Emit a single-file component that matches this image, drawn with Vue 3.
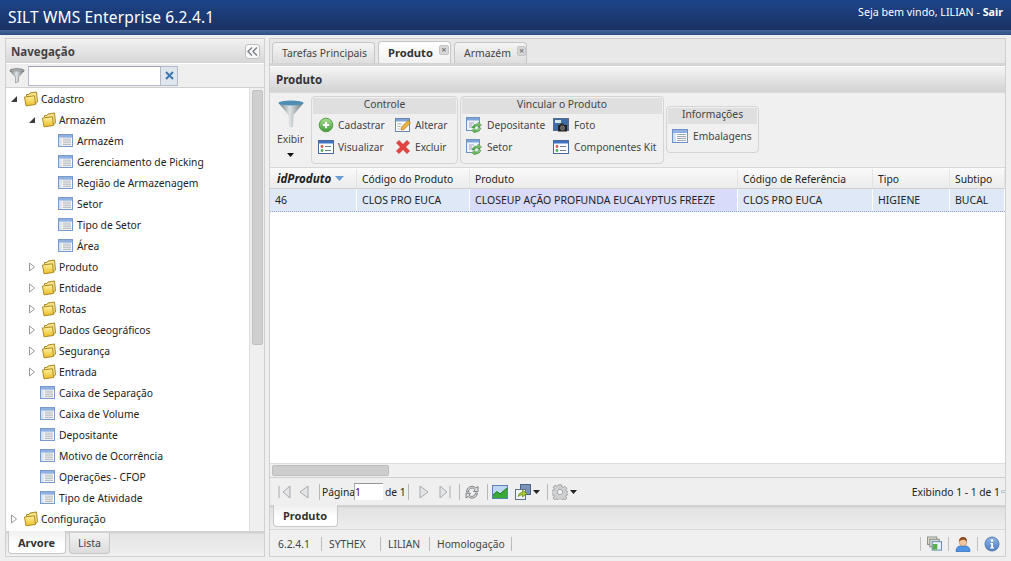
<script setup>
const tree = [
  { t: 'Cadastro', d: 0, k: 'open' },
  { t: 'Armazém', d: 1, k: 'open' },
  { t: 'Armazém', d: 2, k: 'leaf' },
  { t: 'Gerenciamento de Picking', d: 2, k: 'leaf' },
  { t: 'Região de Armazenagem', d: 2, k: 'leaf' },
  { t: 'Setor', d: 2, k: 'leaf' },
  { t: 'Tipo de Setor', d: 2, k: 'leaf' },
  { t: 'Área', d: 2, k: 'leaf' },
  { t: 'Produto', d: 1, k: 'closed' },
  { t: 'Entidade', d: 1, k: 'closed' },
  { t: 'Rotas', d: 1, k: 'closed' },
  { t: 'Dados Geográficos', d: 1, k: 'closed' },
  { t: 'Segurança', d: 1, k: 'closed' },
  { t: 'Entrada', d: 1, k: 'closed' },
  { t: 'Caixa de Separação', d: 1, k: 'leaf' },
  { t: 'Caixa de Volume', d: 1, k: 'leaf' },
  { t: 'Depositante', d: 1, k: 'leaf' },
  { t: 'Motivo de Ocorrência', d: 1, k: 'leaf' },
  { t: 'Operações - CFOP', d: 1, k: 'leaf' },
  { t: 'Tipo de Atividade', d: 1, k: 'leaf' },
  { t: 'Configuração', d: 0, k: 'closed' }
]
const cols = [
  { t: 'idProduto', v: '46', w: 87 },
  { t: 'Código do Produto', v: 'CLOS PRO EUCA', w: 113 },
  { t: 'Produto', v: 'CLOSEUP AÇÃO PROFUNDA EUCALYPTUS FREEZE', w: 268, sel: true },
  { t: 'Código de Referência', v: 'CLOS PRO EUCA', w: 135 },
  { t: 'Tipo', v: 'HIGIENE', w: 77 },
  { t: 'Subtipo', v: 'BUCAL', w: 55 }
]
const stats = [
  { t: '6.2.4.1', w: 44 },
  { t: 'SYTHEX', w: 52 },
  { t: 'LILIAN', w: 42 },
  { t: 'Homologação', w: 75 }
]
</script>

<template>
  <div class="page">
    <svg class="defs" aria-hidden="true">
      <defs>
        <linearGradient id="fold" x1="0" y1="0" x2="0" y2="1"><stop offset="0" stop-color="#fff3a0"/><stop offset="1" stop-color="#ecbc28"/></linearGradient>
        <linearGradient id="funn" x1="0" y1="0" x2="1" y2="0"><stop offset="0" stop-color="#6d7a80"/><stop offset=".45" stop-color="#dfe3e5"/><stop offset="1" stop-color="#69757b"/></linearGradient>
        <linearGradient id="grn" x1="0" y1="0" x2="0" y2="1"><stop offset="0" stop-color="#a8e08e"/><stop offset="1" stop-color="#3f9a3a"/></linearGradient>
        <linearGradient id="blu" x1="0" y1="0" x2="0" y2="1"><stop offset="0" stop-color="#8fb6ea"/><stop offset="1" stop-color="#4d7cc0"/></linearGradient>
        <symbol id="i-folder" viewBox="0 0 16 16">
          <path d="M3.500 5.500 L3.500 3.500 L6 3.500 L7 2 L13.500 1 L14.500 11 L12 13" fill="#f8e388" stroke="#a88a26"/>
          <path d="M1.500 6 L11.500 4.800 L12.500 13.500 L3 14.800 Z" fill="url(#fold)" stroke="#ad8a22"/>
        </symbol>
        <symbol id="i-list" viewBox="0 0 16 14">
          <rect x=".5" y=".5" width="15" height="13" fill="#fff" stroke="#6d92c8"/>
          <rect x="1" y="1" width="14" height="3" fill="#8fb0e0"/>
          <rect x="1" y="4" width="3" height="9" fill="#d5e2f4"/>
          <path d="M5 5.500h9M5 7.500h9M5 9.500h9M5 11.500h9" stroke="#a3a9b2"/>
        </symbol>
        <symbol id="i-view" viewBox="0 0 16 16">
          <rect x=".5" y="1.500" width="15" height="13" fill="#fff" stroke="#4a6a9c"/>
          <rect x="1" y="2" width="14" height="2.500" fill="#3f74c4"/>
          <circle cx="4" cy="7.500" r="1.400" fill="#d8564a"/>
          <circle cx="4" cy="11.500" r="1.400" fill="#58a84a"/>
          <path d="M7 7.500h6M7 11.500h6" stroke="#6f7c8c"/>
        </symbol>
        <symbol id="i-add" viewBox="0 0 16 16">
          <circle cx="8" cy="8" r="6.800" fill="url(#grn)" stroke="#5a9d4c"/>
          <path d="M8 4.800v6.400M4.800 8h6.400" stroke="#fff" stroke-width="2.200"/>
        </symbol>
        <symbol id="i-edit" viewBox="0 0 16 16">
          <rect x=".5" y="1.500" width="14" height="13" fill="#fff" stroke="#6d86ac"/>
          <rect x="1" y="2" width="13" height="2.500" fill="#7ea5d8"/>
          <path d="M2.500 7h4M2.500 9.500h3M2.500 12h2" stroke="#a5aab2"/>
          <path d="M6 13 L6.500 10 L13 3.500 L15.500 6 L9 12.500 Z" fill="#eeb33e" stroke="#a9742a" stroke-width=".7"/>
        </symbol>
        <symbol id="i-del" viewBox="0 0 16 16">
          <path d="M1.500 4 L4 1.500 L8 5.500 L12 1.500 L14.500 4 L10.500 8 L14.500 12 L12 14.500 L8 10.500 L4 14.500 L1.500 12 L5.500 8 Z" fill="#e5433f" stroke="#c8322e" stroke-width=".7"/>
        </symbol>
        <symbol id="i-link" viewBox="0 0 16 16">
          <rect x=".5" y=".5" width="13" height="13" fill="#eef4fb" stroke="#6d92c0"/>
          <rect x="1" y="1" width="12" height="2.500" fill="#7ea5d8"/>
          <path d="M3 6h5M3 8h3M3 10h3" stroke="#9aa7b6"/>
          <path d="M6 11 Q7 6.500 12 7 L12 5 L15.500 8 L12 10.500 L12 8.700 Q9 8.500 8.500 11 Z" fill="url(#grn)" stroke="#3e8c3a" stroke-width=".5"/>
          <path d="M15 11 Q13.500 15.500 9 15 L9 16 L5.500 13.500 L9 11.500 L9 13 Q11.500 13.300 12.500 11 Z" fill="url(#grn)" stroke="#3e8c3a" stroke-width=".5"/>
        </symbol>
        <symbol id="i-photo" viewBox="0 0 16 16">
          <rect x=".5" y="1.500" width="15" height="12" fill="#3d6da8" stroke="#5a6c84"/>
          <rect x="2" y="3" width="6" height="3" fill="#d8e4f2"/>
          <path d="M5 8 h9 v6.500 h-9 Z" fill="#222"/>
          <rect x="7" y="6.500" width="4" height="2" fill="#333"/>
          <circle cx="9.500" cy="11" r="2" fill="#555" stroke="#aaa" stroke-width=".6"/>
        </symbol>
        <symbol id="i-refresh" viewBox="0 0 16 16">
          <path d="M2.500 8 A5.500 5.500 0 0 1 12 4 L14 2.500 L14 7.500 L9.500 7.500 L11 5.500 A3.600 3.600 0 0 0 4.500 8 Z" fill="#dfe1e3" stroke="#77797c" stroke-width=".9"/>
          <path d="M13.500 9 A5.500 5.500 0 0 1 4 12.500 L2 14 L2 9.200 L6.500 9.200 L5 11 A3.600 3.600 0 0 0 11.500 9 Z" fill="#dfe1e3" stroke="#77797c" stroke-width=".9"/>
        </symbol>
        <symbol id="i-chart" viewBox="0 0 16 16">
          <rect x=".5" y="1.500" width="15" height="13" fill="#bcd6f4" stroke="#5d82b8"/>
          <path d="M1 11 L5 7.500 L8 10 L15 4 L15 14 L1 14 Z" fill="#38a838"/>
          <path d="M1 11 L5 7.500 L8 10 L15 4" fill="none" stroke="#1d7a1d"/>
        </symbol>
        <symbol id="i-export" viewBox="0 0 16 16">
          <rect x="5.500" y=".5" width="10" height="10" fill="#7c92b4" stroke="#4c6288"/>
          <rect x=".5" y="5.500" width="10" height="10" fill="#f1f3f6" stroke="#5f7088"/>
          <path d="M3 12.500 Q3.500 8.500 7.500 8.200 L7.500 6 L12 9.500 L7.500 13 L7.500 10.800 Q5 10.800 3 12.500 Z" fill="#a8c832" stroke="#6d8a1c" stroke-width=".7"/>
        </symbol>
        <symbol id="i-gear" viewBox="0 0 16 16">
          <g fill="#cfd0d2" stroke="#8b8c8f" stroke-width=".7">
            <path d="M6.600 .8h2.800l.4 2 1.400.6 1.700-1.100 2 2-1.100 1.700.6 1.400 2 .4v2.800l-2 .4-.6 1.400 1.100 1.700-2 2-1.700-1.100-1.400.6-.4 2H6.600l-.4-2-1.400-.6-1.700 1.100-2-2 1.100-1.700-.6-1.400-2-.4V6.600l2-.4.6-1.400L1.100 3.100l2-2 1.700 1.100 1.400-.6z"/>
            <circle cx="8" cy="8" r="2.600" fill="#f4f4f5"/>
          </g>
        </symbol>
        <symbol id="i-windows" viewBox="0 0 16 16">
          <rect x=".5" y=".5" width="10" height="8" fill="#d8d8d0" stroke="#8c9184"/>
          <rect x="3" y="3" width="10" height="8" fill="#dde0da" stroke="#84887e"/>
          <rect x="5.500" y="5.500" width="10" height="9" fill="#e9f1fa" stroke="#5d87b8"/>
          <rect x="6" y="8" width="5" height="6" fill="#5ab04e"/>
        </symbol>
        <symbol id="i-user" viewBox="0 0 16 16">
          <path d="M1 15.500 Q1 10.500 5 10 L11 10 Q15 10.500 15 15.500 Z" fill="#4f93e6" stroke="#2d69b5" stroke-width=".7"/>
          <circle cx="8" cy="6" r="3.800" fill="#f3c79e" stroke="#b88a62" stroke-width=".6"/>
          <path d="M4 5.500 Q4 1 8 1 Q12 1 12 5.500 Q10 3.500 8 3.700 Q6 3.500 4 5.500 Z" fill="#8a4b20"/>
        </symbol>
        <symbol id="i-info" viewBox="0 0 16 16">
          <circle cx="8" cy="8" r="7" fill="url(#blu)" stroke="#577cab"/>
          <circle cx="8" cy="4.600" r="1.300" fill="#fff"/>
          <path d="M6.400 7h2.600v4.200h1v1.200H6.200v-1.200h1V8.200H6.400z" fill="#fff"/>
        </symbol>
        <symbol id="i-funnel" viewBox="0 0 26 28">
          <path d="M.5 3 Q13 8 25.500 3 L15.500 15 L15 26.500 Q13 28.500 11 26.500 L10.500 15 Z" fill="url(#funn)"/>
          <ellipse cx="13" cy="3" rx="12.500" ry="2.500" fill="#4f8eb4"/>
        </symbol>
        <symbol id="i-sfunnel" viewBox="0 0 16 16">
          <ellipse cx="8" cy="2.500" rx="7" ry="1.700" fill="#b8bcbf" stroke="#777"/>
          <path d="M1 3 L6.500 9 L6.500 15 L9.500 13.500 L9.500 9 L15 3 Z" fill="url(#funn)" stroke="#777" stroke-width=".5"/>
        </symbol>
      </defs>
    </svg>

    <header class="topbar">
      <div class="topbar-main">
        <span class="brand">SILT WMS Enterprise 6.2.4.1</span>
        <span class="welcome">Seja bem vindo, LILIAN - <b>Sair</b></span>
      </div>
      <div class="topbar-band"></div>
    </header>

    <div class="workspace">
      <aside class="nav">
        <div class="nav-head">
          <span>Navegação</span>
          <button class="collapse" aria-label="Recolher">
            <svg width="11" height="9" viewBox="0 0 11 9"><path d="M5 .5 1 4.500 5 8.500M10 .5 6 4.500 10 8.500" fill="none" stroke="#7b8087" stroke-width="1.400"/></svg>
          </button>
        </div>
        <div class="nav-filter">
          <svg class="ic16"><use href="#i-sfunnel"/></svg>
          <div class="filter-input"></div>
          <div class="filter-clear">
            <svg width="9" height="9" viewBox="0 0 9 9"><path d="M1 1 8 8M8 1 1 8" stroke="#3a78b0" stroke-width="2"/></svg>
          </div>
        </div>
        <div class="tree-wrap">
          <ul class="tree">
            <li v-for="n in tree" :key="n.t + n.d" class="node" :class="'d' + n.d">
              <span class="twist">
                <svg v-if="n.k === 'open'" width="8" height="8" viewBox="0 0 8 8"><path d="M7 1 7 7 1 7Z" fill="#3b3b3b"/></svg>
                <svg v-else-if="n.k === 'closed'" width="8" height="10" viewBox="0 0 8 10"><path d="M1.500 1 6.500 5 1.500 9Z" fill="#fff" stroke="#9b9b9b"/></svg>
              </span>
              <svg v-if="n.k === 'leaf'" class="leaf-ic"><use href="#i-list"/></svg>
              <svg v-else class="ic16"><use href="#i-folder"/></svg>
              <span class="label">{{ n.t }}</span>
            </li>
          </ul>
          <div class="vscroll"><div class="vthumb"></div></div>
        </div>
        <div class="nav-tabs">
          <span class="navtab active">Arvore</span>
          <span class="navtab">Lista</span>
        </div>
      </aside>

      <main class="content">
        <div class="tabs">
          <span class="tab t1">Tarefas Principais</span>
          <span class="tab t2 active">Produto<i class="close">×</i></span>
          <span class="tab t3">Armazém<i class="close">×</i></span>
        </div>

        <section class="panel">
          <h2 class="panel-title">Produto</h2>
          <div class="toolbar">
            <div class="exibir">
              <svg class="funnel"><use href="#i-funnel"/></svg>
              <span>Exibir</span>
              <svg width="7" height="4" viewBox="0 0 7 4"><path d="M0 0h7L3.500 4Z" fill="#111"/></svg>
            </div>
            <div class="group g1">
              <div class="g-title">Controle</div>
              <div class="g-body c1">
                <span class="act"><svg class="ic16"><use href="#i-add"/></svg>Cadastrar</span>
                <span class="act"><svg class="ic16"><use href="#i-edit"/></svg>Alterar</span>
                <span class="act"><svg class="ic16"><use href="#i-view"/></svg>Visualizar</span>
                <span class="act"><svg class="ic16"><use href="#i-del"/></svg>Excluir</span>
              </div>
            </div>
            <div class="group g2">
              <div class="g-title">Vincular o Produto</div>
              <div class="g-body c2">
                <span class="act"><svg class="ic16"><use href="#i-link"/></svg>Depositante</span>
                <span class="act"><svg class="ic16"><use href="#i-photo"/></svg>Foto</span>
                <span class="act"><svg class="ic16"><use href="#i-link"/></svg>Setor</span>
                <span class="act"><svg class="ic16"><use href="#i-view"/></svg>Componentes Kit</span>
              </div>
            </div>
            <div class="group g3">
              <div class="g-title">Informações</div>
              <div class="g-body c3">
                <span class="act"><svg class="ic16"><use href="#i-list"/></svg>Embalagens</span>
              </div>
            </div>
          </div>

          <div class="grid">
            <div class="grow ghead">
              <div v-for="(c, i) in cols" :key="c.t" class="gc" :class="{ sorted: i === 0 }" :style="{ width: c.w + 'px' }">
                {{ c.t }}<svg v-if="i === 0" class="sort" width="9" height="5" viewBox="0 0 9 5"><path d="M0 0h9L4.500 5Z" fill="#6b9ed6"/></svg>
              </div>
            </div>
            <div class="grow gdata">
              <div v-for="c in cols" :key="c.t" class="gc" :class="{ sel: c.sel }" :style="{ width: c.w + 'px' }">{{ c.v }}</div>
            </div>
            <div class="gblank"></div>
            <div class="hscroll"><div class="hthumb"></div></div>
          </div>

          <div class="pager">
            <svg class="pg" viewBox="0 0 16 16"><path d="M3 2v12M14 2 7 8l7 6Z" fill="#e3e4e6" stroke="#a9abae"/></svg>
            <svg class="pg m4" viewBox="0 0 16 16"><path d="M12 2 4 8l8 6Z" fill="#e3e4e6" stroke="#a9abae"/></svg>
            <i class="sep m7"></i>
            <span class="pg-txt w32 m2">Página</span>
            <span class="pg-input">1</span>
            <span class="pg-txt w20 m2">de 1</span>
            <i class="sep m3"></i>
            <svg class="pg m7" viewBox="0 0 16 16"><path d="M4 2l8 6-8 6Z" fill="#e3e4e6" stroke="#a9abae"/></svg>
            <svg class="pg m4" viewBox="0 0 16 16"><path d="M14 2v12M4 2l7 6-7 6Z" fill="#e3e4e6" stroke="#a9abae"/></svg>
            <i class="sep m7"></i>
            <svg class="ic16 m4"><use href="#i-refresh"/></svg>
            <i class="sep m7"></i>
            <svg class="ic16 m4"><use href="#i-chart"/></svg>
            <svg class="ic16 m7"><use href="#i-export"/></svg>
            <svg class="caret m2" width="7" height="4" viewBox="0 0 7 4"><path d="M0 0h7L3.500 4Z" fill="#222"/></svg>
            <i class="sep m7"></i>
            <svg class="ic16 m4"><use href="#i-gear"/></svg>
            <svg class="caret m2" width="7" height="4" viewBox="0 0 7 4"><path d="M0 0h7L3.500 4Z" fill="#222"/></svg>
            <span class="pg-count">Exibindo 1 - 1 de 1</span>
            <i class="tick"></i>
          </div>
        </section>

        <div class="bottom-tabs"><span class="btab">Produto</span></div>

        <footer class="status">
          <span v-for="s in stats" :key="s.t" class="st" :style="{ width: s.w + 'px' }">{{ s.t }}</span>
          <span class="st-icons">
            <i class="sep2"></i><svg class="win"><use href="#i-windows"/></svg>
            <i class="sep2"></i><svg class="ic16"><use href="#i-user"/></svg>
            <i class="sep2"></i><svg class="ic16"><use href="#i-info"/></svg>
          </span>
        </footer>
      </main>
    </div>
  </div>
</template>

<style>
html, body { margin: 0; background: #f0f0f0; overflow: hidden; }
</style>

<style scoped>
.page {
  width: 1011px;
  height: 561px;
  overflow: hidden;
  background: #efefef;
  font-family: "Noto Sans", "Liberation Sans", sans-serif;
  font-size: 10.300px;
  color: #222;
  display: flex;
  flex-direction: column;
}
.defs { width: 0; height: 0; display: block; }
svg { flex: none; display: block; }
.ic16 { width: 16px; height: 16px; }
.win { width: 15px; height: 16px; }
.m2 { margin-left: 2px; }
.m3 { margin-left: 3px; }
.m4 { margin-left: 4px; }
.m7 { margin-left: 7px; }

.topbar { height: 35px; flex: none; }
.topbar-main {
  height: 30px;
  background: linear-gradient(#1c4489, #1b3263);
  color: #fff;
  display: flex;
  align-items: center;
  justify-content: space-between;
  padding: 0 8px 0 8px;
}
.brand { font-size: 15.500px; letter-spacing: .15px; margin-top: 4px; }
.welcome { font-size: 10.700px; margin-top: -6px; }
.topbar-band { height: 5px; background: linear-gradient(#45689a, #2c4c84); }

.workspace {
  flex: 1;
  display: flex;
  gap: 4px;
  padding: 3px 5px 4px 5px;
  min-height: 0;
}

.nav {
  width: 258px;
  border: 1px solid #d0d0d0;
  display: flex;
  flex-direction: column;
  background: #f0f0f0;
}
.nav-head {
  height: 24px;
  flex: none;
  display: flex;
  align-items: center;
  justify-content: space-between;
  padding: 0 4px 0 5px;
  background: linear-gradient(#f2f2f2, #d6d6d6);
  font-weight: 700;
  font-size: 11.500px;
  color: #444;
}
.collapse {
  width: 15px;
  height: 15px;
  border: 1px solid #bfbfbf;
  border-radius: 3px;
  background: #f8f8f8;
  padding: 0;
  display: flex;
  align-items: center;
  justify-content: center;
}
.nav-filter {
  height: 25px;
  flex: none;
  display: flex;
  align-items: center;
  padding-left: 3px;
  background: #efefef;
  border-top: 1px solid #fff;
  border-bottom: 1px solid #d0d0d0;
  box-sizing: border-box;
}
.filter-input {
  width: 131px;
  height: 18px;
  margin-left: 3px;
  background: #fff;
  border: 1px solid #b5b8c8;
  border-top-color: #9fa3b5;
}
.filter-clear {
  width: 16px;
  height: 18px;
  border: 1px solid #b5b8c8;
  border-left: 0;
  background: #dfe6ee;
  display: flex;
  align-items: center;
  justify-content: center;
}
.tree-wrap { flex: 1; display: flex; min-height: 0; overflow: hidden; }
.tree {
  flex: 1;
  list-style: none;
  margin: 0;
  padding: 0;
  background: #fff;
  overflow: hidden;
}
.node { height: 21px; display: flex; align-items: center; }
.node.d0 { padding-left: 1px; }
.node.d1 { padding-left: 19px; }
.node.d2 { padding-left: 36px; }
.twist { width: 13px; margin-right: 3px; display: flex; justify-content: center; }
.node .ic16 { margin-right: 2px; }
.leaf-ic { width: 15px; height: 13px; margin-right: 4px; }
.node.d1 .leaf-ic { margin-left: -1px; }
.label { white-space: nowrap; color: #222; }
.vscroll { width: 15px; flex: none; background: #efefef; border-left: 1px solid #ddd; box-sizing: border-box; padding: 2px 2px 0 2px; }
.vthumb { height: 255px; background: #cfcfcf; border: 1px solid #c2c2c2; border-radius: 2px; box-sizing: border-box; width: 11px; }
.nav-tabs {
  height: 25px;
  flex: none;
  display: flex;
  gap: 3px;
  padding-left: 2px;
  background: linear-gradient(#d2d2d2 0, #d2d2d2 2px, #e4e4e4 3px, #efefef);
  box-sizing: border-box;
}
.navtab {
  height: 20px;
  margin-top: 2px;
  padding: 0 8px;
  display: flex;
  align-items: center;
  border: 1px solid #c8c8c8;
  border-top: 0;
  border-radius: 0 0 4px 4px;
  background: linear-gradient(#f2f2f2, #dcdcdc);
  color: #444;
  font-size: 10.500px;
}
.navtab.active {
  height: 22px;
  margin-top: 0;
  background: linear-gradient(#f0f0f0, #fff 60%);
  font-weight: 700;
  font-size: 11px;
  color: #333;
  padding: 0 10px 0 9px;
}

.content {
  flex: 1;
  min-width: 0;
  display: flex;
  flex-direction: column;
  border: 1px solid #d0d0d0;
  background: #efefef;
}
.tabs {
  height: 27px;
  flex: none;
  display: flex;
  align-items: flex-end;
  gap: 3px;
  padding-left: 2px;
  background: #e8e8e8;
  border-bottom: 3px solid #d4d4d4;
  box-sizing: border-box;
}
.tab {
  height: 21px;
  padding: 0 0 0 9px;
  display: flex;
  align-items: center;
  border: 1px solid #c6c6c6;
  border-bottom: 0;
  border-radius: 4px 4px 0 0;
  background: linear-gradient(#f4f4f4, #dedede);
  color: #444;
  font-size: 10.400px;
  box-sizing: border-box;
}
.t1 { width: 103px; }
.t2 { width: 73px; }
.t3 { width: 73px; }
.tab.active {
  background: linear-gradient(#fff, #f1f1f1);
  font-weight: 700;
  font-size: 11.200px;
  color: #333;
  height: 22px;
}
.close {
  width: 8px;
  height: 8px;
  margin: -5px 0 0 6px;
  background: #d8d8d8;
  border: 1px solid #c4c4c4;
  border-radius: 2px;
  color: #777;
  font-size: 9px;
  line-height: 7px;
  text-align: center;
  font-style: normal;
  font-weight: 700;
}
.panel { flex: 1; min-height: 0; display: flex; flex-direction: column; }
.panel-title {
  height: 27px;
  flex: none;
  margin: 0;
  padding: 0 6px;
  display: flex;
  align-items: center;
  font-size: 11.500px;
  font-weight: 700;
  color: #333;
  background: linear-gradient(#f5f5f5, #d2d2d2);
  border-top: 1px solid #fff;
  border-bottom: 1px solid #dcdcdc;
  box-sizing: border-box;
}
.toolbar {
  height: 75px;
  flex: none;
  display: flex;
  align-items: flex-start;
  gap: 2px;
  padding: 3px 0 0 2px;
  background: #f0f0f0;
  border-bottom: 1px solid #d8d8d8;
  box-sizing: border-box;
}
.exibir {
  width: 37px;
  height: 68px;
  display: flex;
  flex-direction: column;
  align-items: center;
  padding-top: 4px;
  box-sizing: border-box;
  color: #444;
}
.funnel { width: 26px; height: 28px; }
.exibir span { margin-top: 4px; line-height: 14px; }
.exibir svg:last-child { margin-top: 7px; }
.group {
  border: 1px solid #d4d4d4;
  border-radius: 4px;
  background: #f0f0f0;
  box-sizing: border-box;
  padding: 1px;
}
.g1 { width: 147px; height: 68px; }
.g2 { width: 204px; height: 68px; }
.g3 { width: 93px; height: 47px; margin-top: 10px; }
.g-title {
  height: 16px;
  background: #dfdfdf;
  text-align: center;
  line-height: 13px;
  color: #444;
}
.g-body { padding: 3px 4px; display: grid; row-gap: 6px; }
.c1 { grid-template-columns: 77px auto; padding-left: 5px; }
.c2 { grid-template-columns: 87px auto; }
.c3 { padding-top: 4px; }
.act { display: flex; align-items: center; gap: 5px; height: 16px; color: #444; white-space: nowrap; font-size: 10.200px; }
.c1 .act { gap: 4px; }

.grid { flex: 1; min-height: 0; display: flex; flex-direction: column; background: #fff; }
.grow { display: flex; flex: none; }
.gc {
  box-sizing: border-box;
  padding: 0 5px;
  display: flex;
  align-items: center;
  border-right: 1px solid #e4e4e4;
  white-space: nowrap;
  color: #222;
}
.ghead { height: 21px; padding-top: 1px; background: linear-gradient(#fafafa, #ebebeb); border-bottom: 1px solid #d0d0d0; box-sizing: border-box; }
.sorted { font-weight: 700; font-style: italic; font-size: 11.600px; padding-left: 7px; }
.sort { margin-left: 4px; }
.gdata {
  height: 23px;
  background: #dfe8f6;
  border-bottom: 1px dotted #8ea6cc;
  box-sizing: border-box;
  font-size: 10.500px;
}
.gdata .gc { border-right-color: #fff; }
.gdata .sel { background: #d8dcfa; }
.gblank { flex: 1; }
.hscroll {
  height: 15px;
  flex: none;
  background: #f0f0f0;
  border-top: 1px solid #dcdcdc;
  border-bottom: 1px solid #d0d0d0;
  padding: 1px 2px;
  box-sizing: border-box;
}
.hthumb { width: 117px; height: 11px; background: #cdcdcd; border: 1px solid #bdbdbd; border-radius: 2px; box-sizing: border-box; }
.pager {
  height: 27px;
  flex: none;
  display: flex;
  align-items: center;
  padding: 0 0 0 6px;
  background: #efefef;
  overflow: hidden;
}
.pg { width: 16px; height: 16px; flex: none; }
.sep { width: 1px; height: 16px; background: #b8b8b8; flex: none; }
.pg-txt { color: #222; white-space: nowrap; }
.w32 { width: 32px; }
.w20 { width: 20px; }
.pg-input {
  width: 29px;
  height: 17px;
  background: #fff;
  border-top: 1px solid #999;
  border-left: 1px solid #aaa;
  color: #505;
  line-height: 16px;
  box-sizing: border-box;
}
.pg-count { margin-left: auto; color: #222; white-space: nowrap; }
.tick { width: 4px; height: 3px; margin-left: 1px; border: 1px solid #bcc6d6; border-right: 0; box-sizing: border-box; }
.bottom-tabs {
  height: 25px;
  flex: none;
  padding-left: 3px;
  background: linear-gradient(#d2d2d2 0, #d2d2d2 2px, #e2e2e2 3px, #eeeeee);
  box-sizing: border-box;
  border-bottom: 1px solid #d8d8d8;
}
.btab {
  display: inline-flex;
  align-items: center;
  height: 22px;
  padding: 0 10px 0 9px;
  font-weight: 700;
  font-size: 11px;
  color: #333;
  background: linear-gradient(#efefef, #fff 60%);
  border: 1px solid #c8c8c8;
  border-top: 0;
  border-radius: 0 0 4px 4px;
  box-sizing: border-box;
}
.status {
  height: 26px;
  flex: none;
  display: flex;
  align-items: center;
  padding: 2px 0 0 8px;
  background: #f0f0f0;
  color: #444;
  box-sizing: border-box;
}
.st { display: flex; align-items: center; height: 14px; margin-right: 7px; border-right: 1px solid #bbb; box-sizing: border-box; }
.st-icons { margin-left: auto; display: flex; align-items: center; gap: 6px; padding-right: 5px; }
.sep2 { width: 1px; height: 14px; background: #c0c0c0; }
</style>
